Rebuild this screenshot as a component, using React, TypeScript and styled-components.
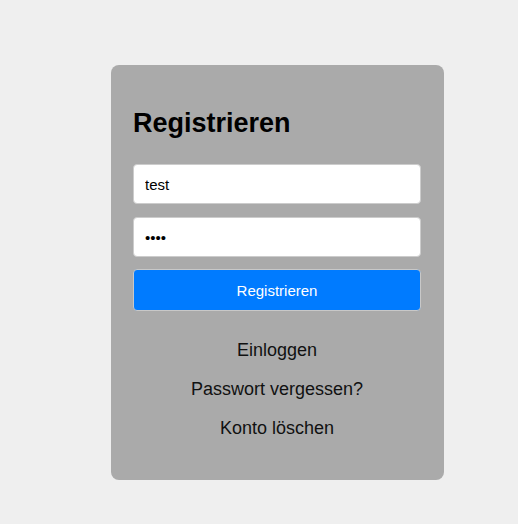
import React, { useState } from 'react'
import styled, { createGlobalStyle } from 'styled-components'

const GlobalStyle = createGlobalStyle`
  body {
    margin: 0;
    background-color: #efefef;
    font-family: "Liberation Sans", Arial, sans-serif;
  }
`

const Page = styled.div`
  min-height: 524px;
  padding: 65px 0 0 111px;
  box-sizing: border-box;
`

const Card = styled.div`
  width: 333px;
  box-sizing: border-box;
  padding: 20px 23px 20px 22px;
  background-color: #aaaaaa;
  border-radius: 8px;
  display: flex;
  flex-direction: column;
`

const Title = styled.h2`
  margin: 23px 0 25px;
  font-size: 27px;
  line-height: 31px;
  font-weight: bold;
  color: #000;
`

const Form = styled.form`
  display: flex;
  flex-direction: column;
  gap: 13px;
`

const Input = styled.input`
  height: 40px;
  box-sizing: border-box;
  padding: 0 11px;
  border: 1px solid #cccccc;
  border-radius: 4px;
  background: #fff;
  font-family: "Liberation Sans", Arial, sans-serif;
  font-size: 15px;
  color: #000;
  outline: none;
`

const Button = styled.button`
  height: 42px;
  margin-top: -1px;
  border: 1px solid #c8c8c8;
  border-radius: 4px;
  background-color: #007bff;
  color: #fff;
  font-family: "Liberation Sans", Arial, sans-serif;
  font-size: 15px;
  cursor: pointer;
`

const Links = styled.nav`
  display: flex;
  flex-direction: column;
  align-items: center;
  gap: 18px;
  margin: 29px 0 21px;
`

const TextLink = styled.a`
  font-size: 18px;
  line-height: 21px;
  color: #111;
  text-decoration: none;
  cursor: pointer;
`

const App = () => {
  const [user, setUser] = useState('test')
  const [pass, setPass] = useState('test')

  return (
    <Page>
      <GlobalStyle />
      <Card>
        <Title>Registrieren</Title>
        <Form onSubmit={(e) => e.preventDefault()}>
          <Input type="text" value={user} onChange={(e) => setUser(e.target.value)} />
          <Input type="password" value={pass} onChange={(e) => setPass(e.target.value)} />
          <Button type="submit">Registrieren</Button>
        </Form>
        <Links>
          <TextLink>Einloggen</TextLink>
          <TextLink>Passwort vergessen?</TextLink>
          <TextLink>Konto löschen</TextLink>
        </Links>
      </Card>
    </Page>
  )
}

export default App
